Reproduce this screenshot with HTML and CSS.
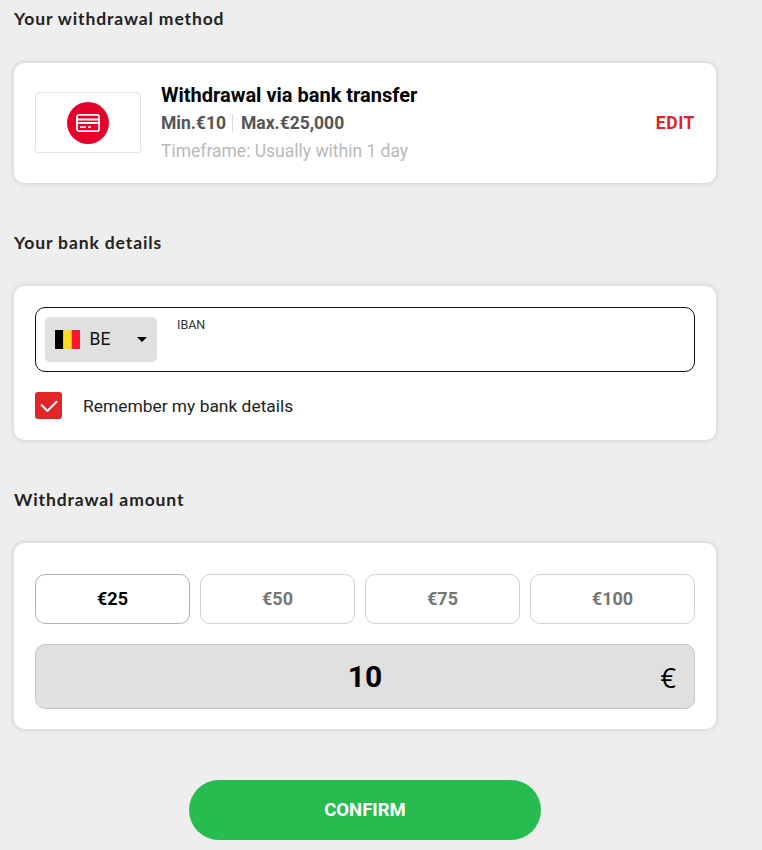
FILE: index.html
```html
<!DOCTYPE html>
<html lang="en">
<head>
<meta charset="utf-8">
<title>Withdrawal</title>
<link rel="stylesheet" href="styles.css">
</head>
<body>
<main class="page">
  <section class="section section-method">
    <h2 class="heading">Your withdrawal method</h2>
    <div class="card method-card">
      <div class="method-logo">
        <span class="method-badge">
          <svg class="card-icon" width="24" height="18" viewBox="0 0 24 18" fill="none">
            <rect x="0.9" y="0.9" width="22.2" height="16.2" rx="2.2" stroke="#fff" stroke-width="1.8"/>
            <path d="M1 5.5h22M1 9h22" stroke="#fff" stroke-width="1.8"/>
            <path d="M4 13.2h6M12 13.2h3" stroke="#fff" stroke-width="1.8"/>
          </svg>
        </span>
      </div>
      <div class="method-info">
        <div class="method-title">Withdrawal via bank transfer</div>
        <div class="method-limits"><span>Min.€10</span><span class="divider"></span><span>Max.€25,000</span></div>
        <div class="method-time">Timeframe: Usually within 1 day</div>
      </div>
      <a class="edit-link">EDIT</a>
    </div>
  </section>

  <section class="section section-bank">
    <h2 class="heading">Your bank details</h2>
    <div class="card bank-card">
      <div class="iban-field">
        <div class="country-select">
          <svg class="flag" width="25" height="19" viewBox="0 0 25 19">
            <rect width="8.33" height="19" fill="#000"/>
            <rect x="8.33" width="8.34" height="19" fill="#fdda24"/>
            <rect x="16.67" width="8.33" height="19" fill="#f8172f"/>
          </svg>
          <span class="country-code">BE</span>
          <span class="caret"></span>
        </div>
        <label class="iban-label">IBAN</label>
      </div>
      <div class="remember">
        <span class="checkbox">
          <svg width="18" height="12" viewBox="0 0 18 12" fill="none">
            <path d="M1 4.5 7.5 11 17 1.2" stroke="#fff" stroke-width="2"/>
          </svg>
        </span>
        <span class="remember-text">Remember my bank details</span>
      </div>
    </div>
  </section>

  <section class="section section-amount">
    <h2 class="heading">Withdrawal amount</h2>
    <div class="card amount-card">
      <div class="amount-options">
        <button class="amount-option is-active">€25</button>
        <button class="amount-option">€50</button>
        <button class="amount-option">€75</button>
        <button class="amount-option">€100</button>
      </div>
      <div class="amount-input">
        <span class="amount-value">10</span>
        <span class="amount-currency">€</span>
      </div>
    </div>
  </section>

  <div class="actions">
    <button class="confirm">CONFIRM</button>
  </div>
</main>
</body>
</html>
```
FILE: styles.css
```css
* { box-sizing: border-box; }
html, body { margin: 0; padding: 0; }
body {
  background: #eeeeee;
  font-family: Roboto, "Liberation Sans", sans-serif;
  color: #000;
  height: 850px;
  overflow: hidden;
}
.page { width: 702px; margin-left: 14px; }
.section { display: flex; flex-direction: column; }
.section-method { padding-top: 8px; }
.section-bank { padding-top: 49px; }
.section-amount { padding-top: 49px; }
.heading {
  margin: 0 0 33px;
  height: 21px;
  font-family: Lato, sans-serif;
  font-weight: 700;
  font-size: 17.5px;
  line-height: 21px;
  letter-spacing: 0.88px;
  color: #222;
}
.section-method .heading { margin-bottom: 34px; }
.card {
  background: #fff;
  border-radius: 10px;
  box-shadow: 0 0 6px rgba(0, 0, 0, 0.16);
  padding: 21px;
}
.method-card {
  display: flex;
  align-items: center;
  height: 120px;
  padding-top: 0;
  padding-bottom: 0;
}
.method-logo {
  width: 106px;
  height: 61px;
  margin-bottom: 1px;
  border: 1px solid #e2e2e2;
  border-radius: 3px;
  display: flex;
  align-items: center;
  justify-content: center;
  flex: none;
}
.method-badge {
  width: 42px;
  height: 42px;
  border-radius: 50%;
  background: #e4002b;
  display: flex;
  align-items: center;
  justify-content: center;
}
.card-icon { display: block; }
.method-info { flex: 1; margin-left: 20px; }
.method-title {
  font-weight: 700;
  font-size: 20px;
  line-height: 28px;
  color: #000;
}
.method-limits {
  display: flex;
  align-items: center;
  font-weight: 700;
  font-size: 17.5px;
  line-height: 28px;
  color: #555;
}
.divider {
  width: 1px;
  height: 18px;
  background: #ddd;
  margin: 0 8px 0 6px;
}
.method-time {
  font-size: 17.5px;
  line-height: 28px;
  color: #b9b9b9;
}
.edit-link {
  font-weight: 700;
  font-size: 17.5px;
  color: #e31f2b;
  letter-spacing: 0.55px;
}
.bank-card { height: 154px; }
.iban-field {
  display: flex;
  align-items: flex-start;
  height: 65px;
  border: 1px solid #111;
  border-radius: 10px;
  padding: 9px;
}
.country-select {
  width: 112px;
  height: 45px;
  background: #e0e0e0;
  border-radius: 5px;
  display: flex;
  align-items: center;
  padding: 0 10px;
  flex: none;
}
.flag { display: block; flex: none; }
.country-code {
  margin-left: 9.5px;
  padding-bottom: 2px;
  font-size: 17.5px;
  color: #111;
  flex: 1;
}
.caret {
  width: 0;
  height: 0;
  border-left: 5px solid transparent;
  border-right: 5px solid transparent;
  border-top: 5px solid #000;
}
.iban-label {
  margin-left: 20px;
  font-size: 12.5px;
  line-height: 16px;
  color: #333;
}
.remember {
  display: flex;
  align-items: center;
  margin-top: 20px;
}
.checkbox {
  width: 27px;
  height: 27px;
  background: #e42528;
  border-radius: 3px;
  display: flex;
  align-items: center;
  justify-content: center;
  flex: none;
}
.remember-text {
  margin-left: 21px;
  font-size: 17.4px;
  color: #222;
}
.amount-card {
  height: 186px;
  padding-top: 31px;
}
.amount-options {
  display: grid;
  grid-template-columns: 155px 155px 155px 165px;
  gap: 10px;
}
.amount-option {
  height: 50px;
  background: #fff;
  border: 1px solid #d2d2d2;
  border-radius: 10px;
  font-family: inherit;
  font-weight: 700;
  font-size: 18px;
  color: #757575;
  padding: 0 0 2px;
}
.amount-option.is-active {
  border-color: #b2b2b2;
  color: #000;
}
.amount-input {
  position: relative;
  display: flex;
  align-items: center;
  justify-content: center;
  height: 65px;
  margin-top: 20px;
  background: #e0e0e0;
  border: 1px solid #c6c6c6;
  border-radius: 10px;
}
.amount-value {
  font-weight: 700;
  font-size: 30px;
  color: #000;
}
.amount-currency {
  position: absolute;
  right: 18px;
  top: 50%;
  transform: translateY(-50%);
  font-family: "Open Sans", sans-serif;
  font-weight: 400;
  font-size: 27px;
  color: #000;
}
.actions {
  display: flex;
  justify-content: center;
  padding-top: 51px;
}
.confirm {
  width: 352px;
  height: 60px;
  border: 0;
  border-radius: 30px;
  background: #26bc50;
  color: #fff;
  font-family: inherit;
  font-weight: 700;
  font-size: 18.5px;
}
```
